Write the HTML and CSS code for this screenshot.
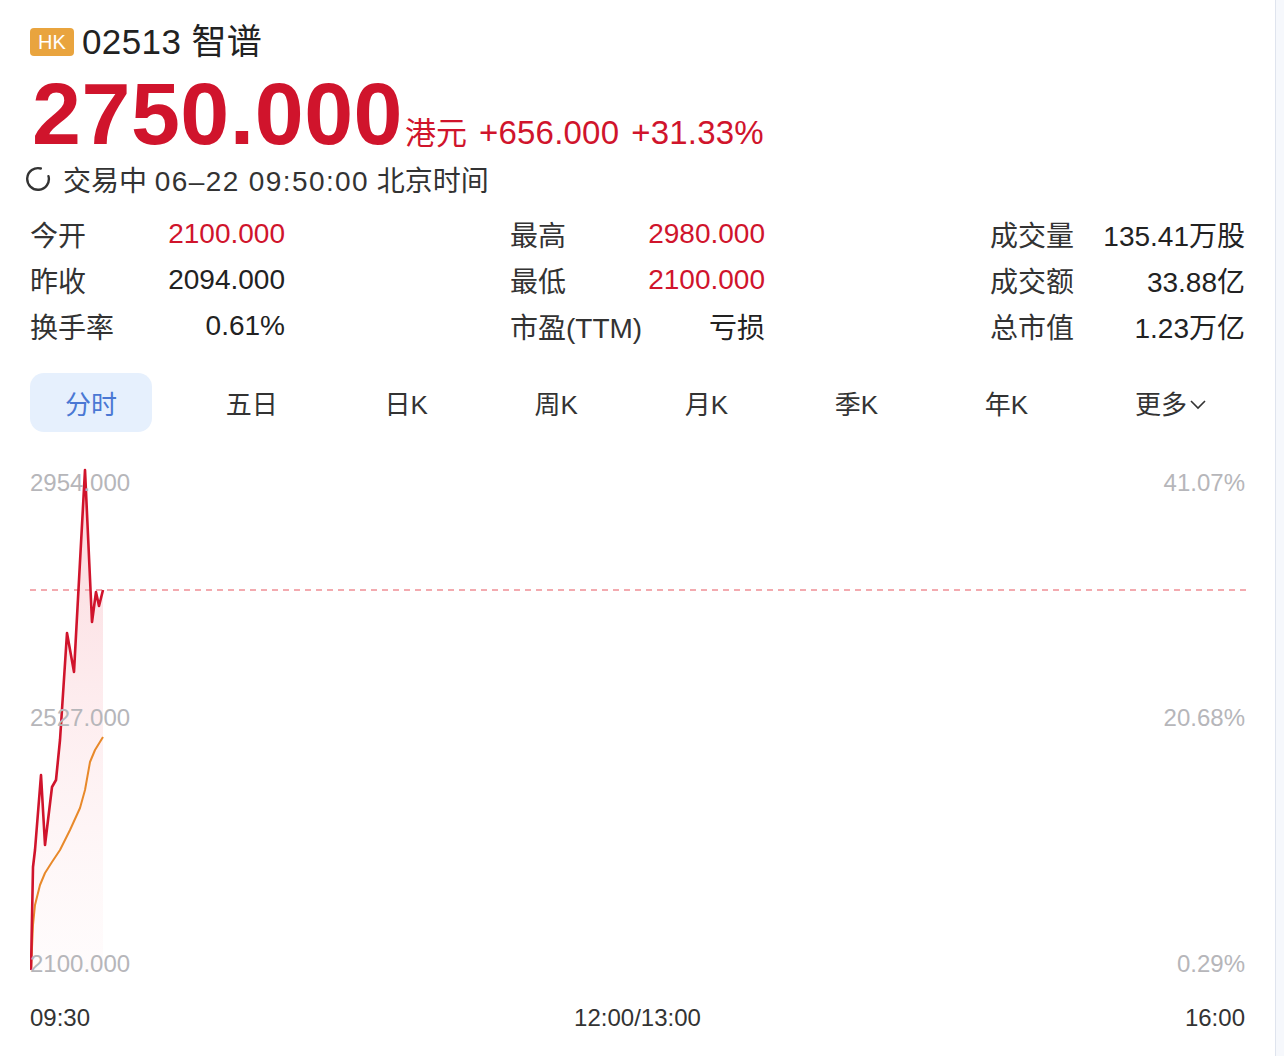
FILE: index.html
```html
<!DOCTYPE html>
<html lang="zh-CN">
<head>
  <meta charset="UTF-8" />
  <meta name="viewport" content="width=device-width, initial-scale=1" />
  <title>智谱 02513 行情</title>
  <link rel="stylesheet" href="styles.css">
</head>
<body>
  <main class="quote">
    <header class="head">
      <span class="badge">HK</span>
      <h1 class="name">02513 智谱</h1>
    </header>

    <div class="price-row">
      <span class="price">2750.000</span>
      <span class="unit">港元</span>
      <span class="chg">+656.000</span>
      <span class="chg">+31.33%</span>
    </div>

    <div class="status">
      <svg class="spin" width="26" height="26" viewBox="0 0 24 24" aria-hidden="true">
        <path d="M14.6 2.3 A10 10 0 1 0 21.7 9.4" fill="none" stroke="#333" stroke-width="2.2" stroke-linecap="round"/>
      </svg>
      <span>交易中 <span class="num">06–22 09:50:00</span> 北京时间</span>
    </div>

    <section class="stats" aria-label="行情数据">
      <dl class="group">
        <div class="row"><dt>今开</dt><dd class="up">2100.000</dd></div>
        <div class="row"><dt>昨收</dt><dd>2094.000</dd></div>
        <div class="row"><dt>换手率</dt><dd>0.61%</dd></div>
      </dl>
      <dl class="group">
        <div class="row"><dt>最高</dt><dd class="up">2980.000</dd></div>
        <div class="row"><dt>最低</dt><dd class="up">2100.000</dd></div>
        <div class="row"><dt>市盈(TTM)</dt><dd>亏损</dd></div>
      </dl>
      <dl class="group">
        <div class="row"><dt>成交量</dt><dd>135.41万股</dd></div>
        <div class="row"><dt>成交额</dt><dd>33.88亿</dd></div>
        <div class="row"><dt>总市值</dt><dd>1.23万亿</dd></div>
      </dl>
    </section>

    <nav class="tabs">
      <a class="tab active">分时</a>
      <a class="tab">五日</a>
      <a class="tab">日K</a>
      <a class="tab">周K</a>
      <a class="tab">月K</a>
      <a class="tab">季K</a>
      <a class="tab">年K</a>
      <a class="tab">更多<svg class="caret" width="18" height="12" viewBox="0 0 18 12" aria-hidden="true"><path d="M2 3 L9 10 L16 3" fill="none" stroke="#333" stroke-width="1.6"/></svg></a>
    </nav>

    <section class="chart">
      <svg class="plot" width="1216" height="520" viewBox="0 0 1216 520" aria-hidden="true">
        <defs>
          <linearGradient id="area" x1="0" y1="0" x2="0" y2="1">
            <stop offset="0" stop-color="#f6a3ad" stop-opacity=".45"/>
            <stop offset="1" stop-color="#fde8ea" stop-opacity=".15"/>
          </linearGradient>
        </defs>
        <!-- prev close -->
        <line x1="0" y1="130" x2="1216" y2="130" stroke="#ef8f95" stroke-width="1.5" stroke-dasharray="6 5"/>
        <polygon fill="url(#area)" points="1,510 3,407 5,390 11,315 15,385 22,327 26,320 30,280 37,173 44,212 55,10 62,162 66,132 69,146 73,130 73,510"/>
        <!-- avg price -->
        <polyline fill="none" stroke="#e8892a" stroke-width="2" stroke-linejoin="round"
          points="1,510 3,465 5,445 10,425 15,413 22,402 30,390 40,370 50,348 55,330 60,302 65,290 73,277"/>
        <!-- last price -->
        <polyline fill="none" stroke="#d0142c" stroke-width="2.6" stroke-linejoin="round"
          points="1,510 3,407 5,390 11,315 15,385 22,327 26,320 30,280 37,173 44,212 55,10 62,162 66,132 69,146 73,130"/>
      </svg>
      <span class="axis left top">2954.000</span>
      <span class="axis left mid">2527.000</span>
      <span class="axis left bot">2100.000</span>
      <span class="axis right top">41.07%</span>
      <span class="axis right mid">20.68%</span>
      <span class="axis right bot">0.29%</span>
    </section>

    <div class="times">
      <span>09:30</span>
      <span>12:00/13:00</span>
      <span>16:00</span>
    </div>
  </main>
</body>
</html>
```

FILE: styles.css
```css
:root{
  --red:#d0142c;
  --text:#222;
  --label:#333;
  --axis:#b6b6ba;
  --blue:#4a78d4;
  --blue-bg:#e6f0fd;
}

* { box-sizing: border-box; }
html, body { height: 100%; }
body{
  margin:0;
  font-family: "Liberation Sans", "Noto Sans CJK SC", sans-serif;
  color:var(--text);
  background:#f6f8fc;
}

.quote{
  width:1276px; min-height:100%;
  padding: 20px 30px 0;
  background:#fff;
  border-right:1px solid #dfe4ee;
}

/* Header */
.head{ display:flex; align-items:center; gap:8px; height:44px; }
.badge{
  width:44px; height:28px; border-radius:4px;
  background:#e9a43e; color:#fff;
  font-size:20px; line-height:28px; text-align:center;
}
.name{ margin:0; font-size:35px; font-weight:400; line-height:44px; letter-spacing:.4px; color:var(--text); }

.price-row{
  display:flex; align-items:baseline; gap:12px;
  height:88px; margin-top:6px; margin-left:2px;
  color:var(--red);
}
.price{ font-size:88px; font-weight:700; line-height:88px; letter-spacing:.5px; }
.unit{ font-size:31px; margin-left:-10px; }
.chg{ font-size:33px; letter-spacing:.2px; }

.status{
  display:flex; align-items:center; gap:12px;
  height:34px; margin-top:4px; margin-left:-5px;
  font-size:28px; color:var(--label);
}
.status .num{ letter-spacing:1.4px; }

/* Stats */
.stats{ display:flex; justify-content:space-between; margin-top:15px; }
.group{ margin:0; width:255px; }
.row{ display:flex; justify-content:space-between; align-items:center; height:46px; font-size:28px; }
.row dt{ color:var(--label); }
.row dd{ margin:0; color:var(--text); }
.row dd.up{ color:var(--red); }

/* Tabs */
.tabs{ display:flex; justify-content:space-between; margin-top:24px; height:59px; }
.tab{
  display:flex; align-items:center; justify-content:center;
  padding:0 33px; border-radius:14px;
  font-size:26px; color:var(--label);
}
.tab.active{ padding:0 35px; background:var(--blue-bg); color:var(--blue); }
.tab:last-child{ padding-right:38px; }
.caret{ margin-left:2px; margin-top:2px; }

/* Chart */
.chart{ position:relative; margin-top:28px; height:520px; }
.plot{ display:block; }
.axis{ position:absolute; font-size:24px; line-height:24px; color:var(--axis); }
.axis.left{ left:0; }
.axis.right{ right:0; }
.axis.top{ top:11px; }
.axis.mid{ top:246px; }
.axis.bot{ top:492px; }

.times{
  display:flex; justify-content:space-between;
  margin-top:23px; line-height:30px;
  font-size:24px; color:var(--label);
}
```
